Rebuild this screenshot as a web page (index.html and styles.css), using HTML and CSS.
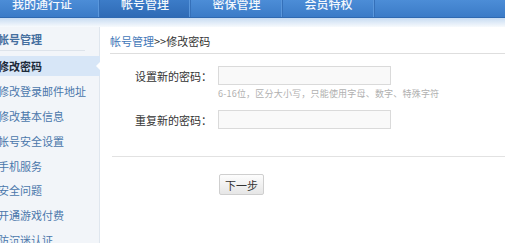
FILE: index.html
```html
<!DOCTYPE html>
<html lang="zh-CN">
<head>
	<meta charset="UTF-8">
	<title>修改密码</title>
	<link rel="stylesheet" href="styles.css">
</head>
<body>
	<div class="top">
		<ul class="nav">
			<li class="first">我的通行证</li>
			<li class="on">帐号管理</li>
			<li>密保管理</li>
			<li>会员特权</li>
		</ul>
		<div class="band"></div>
	</div>
	<div class="wrap">
		<div class="side">
			<div class="side-title">帐号管理</div>
			<ul class="menu">
				<li class="cur">修改密码</li>
				<li>修改登录邮件地址</li>
				<li>修改基本信息</li>
				<li>帐号安全设置</li>
				<li>手机服务</li>
				<li>安全问题</li>
				<li>开通游戏付费</li>
				<li>防沉迷认证</li>
			</ul>
		</div>
		<div class="main">
			<div class="crumb"><a href="#">帐号管理</a>&gt;&gt;修改密码</div>
			<div class="form">
				<div class="row">
					<label>设置新的密码：</label>
					<input type="password" class="txt">
				</div>
				<div class="tip">6-16位，区分大小写，只能使用字母、数字、特殊字符</div>
				<div class="row row2">
					<label>重复新的密码：</label>
					<input type="password" class="txt">
				</div>
			</div>
			<div class="btn-box">
				<input type="button" class="btn" value="下一步">
			</div>
		</div>
	</div>
</body>
</html>
```
FILE: styles.css
```css
* { margin: 0;padding: 0;box-sizing: border-box; }
body { width: 505px;height: 243px;overflow: hidden;font-family: "Noto Sans CJK SC", sans-serif;font-size: 11px;color: #333;background: #fff; }
ul { list-style: none; }
a { color: #4277b8;text-decoration: none; }

.top { height: 27px; }
.nav { display: flex;height: 18px;background: linear-gradient(#4c8dd7, #3b7bc7);border-bottom: 1px solid #2f69b1; }
.nav li { width: 92px;height: 17px;line-height: 8px;text-align: center;color: #f4f8fd;font-size: 12px;font-weight: 500;border-right: 1px solid #3570b9;box-shadow: inset -1px 0 0 #5a97dc; }
.nav .first { width: 100px;text-align: left;padding-left: 12px; }
.nav .on { width: 91px;background: linear-gradient(#3c7cc8, #2f6bb6); }
.band { height: 9px;background: linear-gradient(#c8dcf2, #f7fafd); }

.wrap { display: flex;height: 216px; }
.side { width: 100px;background: #f2f5f9;border-right: 1px solid #dfe6ee; }
.side-title { margin-right: 14px;padding-top: 1px;line-height: 22px;height: 24px;border-bottom: 1px solid #dde3ea;color: #456f9f;font-weight: bold;text-indent: -2px; }
.menu { margin-top: 5px; }
.menu li { position: relative;height: 20px;line-height: 20px;margin-bottom: 4.9px;color: #4a77ab;text-indent: -2px;white-space: nowrap; }
.menu .cur { background: #d7e6f7;color: #1d2a3a;font-weight: bold;margin-right: -1px; }
.menu .cur::after { content: "";position: absolute;right: 0;top: 6px;border-style: solid;border-width: 4px 4px 4px 0;border-color: transparent #fff transparent transparent; }

.main { flex: 1;padding-left: 12px; }
.crumb { padding-top: 3px;line-height: 23px;height: 27px;border-bottom: 1px solid #dedede;margin-left: -2px; }
.form { padding-top: 12px;height: 103px;border-bottom: 1px solid #e2e2e2; }
.row { display: flex;align-items: center;height: 19px; }
.row label { width: 100px;text-align: right;margin-right: 6px; }
.txt { width: 173px;height: 19px;border: 1px solid #dadada;background: #f9f9f9;outline: none; }
.tip { margin: 3px 0 0 106px;line-height: 12px;font-size: 9px;letter-spacing: 0.2px;color: #b0b0b0;white-space: nowrap; }
.row2 { margin-top: 10px; }
.btn-box { padding: 17px 0 0 107px; }
.btn { width: 45px;height: 21px;border: 1px solid #cfcfcf;border-radius: 2px;background: linear-gradient(#fdfdfd, #e6e6e6);font-family: "Noto Sans CJK SC", sans-serif;font-size: 11px;color: #333; }
```
